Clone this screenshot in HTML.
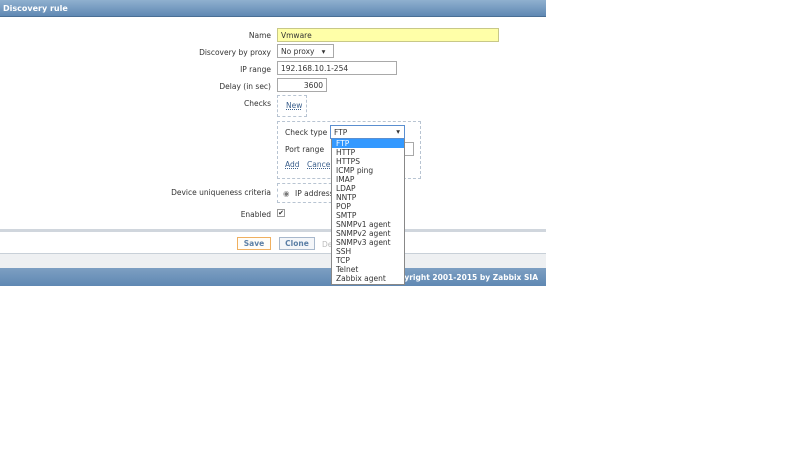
<!DOCTYPE html>
<html><head><style>
body{margin:0;width:800px;height:450px;background:#fff;font-family:Tahoma,"DejaVu Sans","Liberation Sans",sans-serif;font-size:7.5px;color:#333;position:relative;overflow:hidden}
div,span{position:absolute;box-sizing:border-box}
.hdr{left:0;top:0;width:546px;height:17px;background:linear-gradient(#8fb0cf,#5f88b3);color:#fff;font-weight:bold;font-size:8px;padding:4px 3px;border-bottom:1px solid #4a6f95}
.lbl{right:529px;text-align:right;white-space:nowrap}
.in{border:1px solid #a9a9a9;background:#fff;padding:2px 3px;white-space:nowrap}
.dash{border:1px dashed #b8c4d2}
.lnk{color:#3a5f8c;text-decoration:underline dotted}
.it{left:0;width:100%;height:9px;line-height:9px;padding-left:4px}
</style></head><body>
<div class="hdr">Discovery rule</div>
<div class="lbl" style="top:31px">Name</div>
<div class="in" style="left:277px;top:28px;width:222px;height:14px;background:#ffffa8;border-color:#c8c888">Vmware</div>
<div class="lbl" style="top:48px">Discovery by proxy</div>
<div class="in" style="left:277px;top:44px;width:57px;height:14px">No proxy&nbsp;&nbsp;&nbsp;▾</div>
<div class="lbl" style="top:65px">IP range</div>
<div class="in" style="left:277px;top:61px;width:120px;height:14px">192.168.10.1-254</div>
<div class="lbl" style="top:82px">Delay (in sec)</div>
<div class="in" style="left:277px;top:78px;width:50px;height:14px;text-align:right">3600</div>
<div class="lbl" style="top:99px">Checks</div>
<div class="dash" style="left:277px;top:95px;width:30px;height:22px"><span class="lnk" style="left:8px;top:5px">New</span></div>
<div class="dash" style="left:277px;top:121px;width:144px;height:58px">
<span style="left:7px;top:6px">Check type</span>
<span style="left:7px;top:23px">Port range</span>
<span class="in" style="left:126px;top:20px;width:10px;height:14px"></span>
<span class="lnk" style="left:7px;top:38px">Add</span><span class="lnk" style="left:29px;top:38px">Cancel</span>
</div>
<div class="lbl" style="top:188px">Device uniqueness criteria</div>
<div class="dash" style="left:277px;top:183px;width:60px;height:20px"><span style="left:5px;top:5px;color:#777">◉</span><span style="left:17px;top:5px">IP address</span></div>
<div class="lbl" style="top:210px">Enabled</div>
<div style="left:277px;top:209px;width:8px;height:8px;border:1px solid #999;font-size:7px;line-height:6px;text-align:center">✔</div>
<div style="left:0;top:229px;width:546px;height:3px;background:#d0d6dd"></div>
<div style="left:237px;top:237px;width:34px;height:13px;border:1px solid #f0b060;background:#fffdf8;color:#5b7fa6;font-weight:bold;text-align:center;line-height:11px">Save</div>
<div style="left:279px;top:237px;width:36px;height:13px;border:1px solid #a8b8cc;background:#f4f6f9;color:#5b7fa6;font-weight:bold;text-align:center;line-height:11px">Clone</div>
<div style="left:322px;top:240px;color:#bbb">De</div>
<div style="left:0;top:253px;width:546px;height:15px;background:#eef0f2;border-top:1px solid #c8d0d8"></div>
<div style="left:0;top:268px;width:546px;height:18px;background:linear-gradient(#7d9fc2,#5f88b3);color:#fff;font-weight:bold;text-align:right;padding:5px 8px 0 0">Copyright 2001-2015 by Zabbix SIA</div>
<div class="in" style="left:330px;top:125px;width:75px;height:14px;border-color:#5b8fd0;padding-top:2px">FTP<span style="right:4px;top:1px">▾</span></div>
<div style="left:331px;top:139px;width:74px;height:146px;background:#fff;border:1px solid #888;border-top:none">
<div class="it" style="top:0;background:#3399ff;color:#fff">FTP</div>
<div class="it" style="top:9px">HTTP</div>
<div class="it" style="top:18px">HTTPS</div>
<div class="it" style="top:27px">ICMP ping</div>
<div class="it" style="top:36px">IMAP</div>
<div class="it" style="top:45px">LDAP</div>
<div class="it" style="top:54px">NNTP</div>
<div class="it" style="top:63px">POP</div>
<div class="it" style="top:72px">SMTP</div>
<div class="it" style="top:81px">SNMPv1 agent</div>
<div class="it" style="top:90px">SNMPv2 agent</div>
<div class="it" style="top:99px">SNMPv3 agent</div>
<div class="it" style="top:108px">SSH</div>
<div class="it" style="top:117px">TCP</div>
<div class="it" style="top:126px">Telnet</div>
<div class="it" style="top:135px">Zabbix agent</div>
</div>
</body></html>
